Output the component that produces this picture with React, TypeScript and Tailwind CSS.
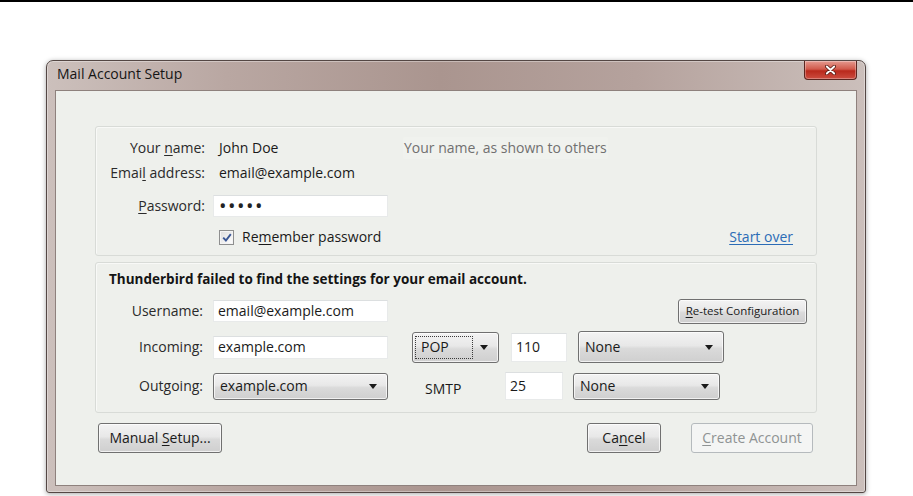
const btn =
  "rounded-[3px] border border-[#707070] bg-[linear-gradient(180deg,#f3f3f3_0%,#e8e8e8_45%,#dadada_55%,#cfcfcf_100%)] shadow-[inset_0_0_0_1px_rgba(255,255,255,0.7)]"

function U({ children }: { children: string }) {
  return <span className="underline decoration-1 underline-offset-[2px]">{children}</span>
}

function Arrow() {
  return (
    <svg width="8" height="5" viewBox="0 0 8 5" className="shrink-0">
      <path d="M0 0h8L4 5z" fill="#1a1a1a" />
    </svg>
  )
}

function Input({ value, className }: { value: string; className: string }) {
  return (
    <div
      className={`flex items-center border border-[#e8eaea] border-t-[#dcdfe0] bg-white px-[4px] ${className}`}
    >
      {value}
    </div>
  )
}

function Menu({ label, className, focus }: { label: string; className: string; focus?: boolean }) {
  return (
    <div className={`flex items-center justify-between pr-[10px] ${btn} ${className}`}>
      {focus ? (
        <span className="ml-[2px] flex h-[23px] w-[58px] items-center border border-dotted border-[#3a3a3a] pl-[5px]">
          {label}
        </span>
      ) : (
        <span className="pl-[6px]">{label}</span>
      )}
      <Arrow />
    </div>
  )
}

export default function App() {
  return (
    <div className="h-[496px] w-[913px] overflow-hidden bg-white font-['Open_Sans',sans-serif] text-[14px] leading-none text-[#1a1a1a]">
      <div className="h-[2px] bg-black" />
      <div className="ml-[46px] mt-[58px] flex h-[433px] w-[820px] flex-col rounded-t-[7px] rounded-b-[3px] border border-[#544744] bg-[linear-gradient(90deg,#ccc0bc_0%,#b9a7a2_22%,#aa958f_48%,#b5a29d_72%,#cbbfbb_100%)] px-[8px] pb-[6px] shadow-[0_1px_5px_rgba(0,0,0,0.35),inset_0_0_0_1px_rgba(255,255,255,0.35)]">
        {/* title bar */}
        <div className="flex h-[29px] shrink-0 items-start justify-between">
          <span className="mt-[6px] pl-[2px] text-[14px] text-[#151515]">Mail Account Setup</span>
          <div className="flex h-[19px] w-[53px] items-center justify-center rounded-b-[4px] border border-t-0 border-[#5b2620] bg-[linear-gradient(180deg,#e59a8f_0%,#d15a4b_45%,#b9291c_55%,#cc4d40_100%)] shadow-[inset_0_0_0_1px_rgba(255,255,255,0.3)]">
            <svg width="11" height="10" viewBox="0 0 11 10">
              <path d="M1.8 1.5l7.4 7M9.2 1.5l-7.4 7" stroke="#5a1d16" strokeWidth="3.6" strokeLinecap="round" />
              <path d="M1.8 1.5l7.4 7M9.2 1.5l-7.4 7" stroke="#ffffff" strokeWidth="1.9" strokeLinecap="round" />
            </svg>
          </div>
        </div>

        {/* client area */}
        <div className="flex flex-1 flex-col border border-[#8e817d] bg-[#eef0ec] px-[39px] pt-[35px]">
          {/* identity group */}
          <div className="rounded-[3px] border border-[#d8dbd7] px-0 pb-[7px] pt-[10px] shadow-[inset_1px_1px_0_#f8f9f7]">
            <div className="flex h-[22px] items-center">
              <span className="w-[109px] text-right text-[#2a2a2a]">
                Your <U>n</U>ame:
              </span>
              <div className="ml-[8px] flex w-[175px] items-center pl-[6px]">John Doe</div>
              <span className="ml-[15px] flex h-[22px] items-center rounded-[2px] bg-[#f0f2ee] px-[1px] text-[#707070]">
                Your name, as shown to others
              </span>
            </div>
            <div className="mt-[3px] flex h-[22px] items-center">
              <span className="w-[109px] text-right text-[#2a2a2a]">
                Emai<U>l</U> address:
              </span>
              <div className="ml-[8px] flex items-center pl-[6px]">email@example.com</div>
            </div>
            <div className="mt-[11px] flex h-[22px] items-center">
              <span className="w-[109px] text-right text-[#2a2a2a]">
                <U>P</U>assword:
              </span>
              <Input value="•••••" className="ml-[8px] h-[22px] w-[175px] pl-[5px] text-[20px] tracking-[1.5px] text-[#222]" />
            </div>
            <div className="mt-[9px] flex h-[22px] items-center">
              <div className="ml-[123px] flex h-[15px] w-[15px] items-center justify-center border border-[#8e8f8f] bg-[linear-gradient(135deg,#dcdcdc,#ffffff)] shadow-[inset_0_0_0_1px_#f4f4f4]">
                <svg width="10" height="9" viewBox="0 0 10 9">
                  <path d="M1.2 4.6l2.7 2.9L8.8 1.2" fill="none" stroke="#3a5795" strokeWidth="1.9" />
                </svg>
              </div>
              <span className="ml-[8px]">
                Re<U>m</U>ember password
              </span>
              <span className="ml-auto mr-[23px] text-[#2b6cb6] underline decoration-1 underline-offset-[2px]">
                Start over
              </span>
            </div>
          </div>

          {/* server settings group */}
          <div className="mt-[6px] rounded-[3px] border border-[#d8dbd7] pb-[12px] pt-[8px] shadow-[inset_1px_1px_0_#f8f9f7]">
            <div className="flex h-[18px] items-center pl-[13px] text-[13.5px] font-bold text-[#141414]">
              Thunderbird failed to find the settings for your email account.
            </div>
            <div className="mt-[9px] flex h-[26px] items-center">
              <span className="w-[107px] text-right text-[#2a2a2a]">Username:</span>
              <Input value="email@example.com" className="ml-[10px] h-[22px] w-[175px]" />
              <div className={`ml-auto mr-[9px] flex h-[25px] w-[129px] items-center justify-center text-[11.5px] ${btn}`}>
                <span>
                  <U>R</U>e-test Configuration
                </span>
              </div>
            </div>
            <div className="mt-[7px] flex h-[32px] items-center">
              <span className="w-[107px] text-right text-[#2a2a2a]">Incoming:</span>
              <Input value="example.com" className="ml-[10px] h-[23px] w-[175px]" />
              <Menu label="POP" focus className="ml-[24px] h-[31px] w-[87px]" />
              <Input value="110" className="ml-[12px] h-[29px] w-[56px]" />
              <Menu label="None" className="ml-[11px] h-[32px] w-[146px]" />
            </div>
            <div className="mt-[9px] flex h-[28px] items-center">
              <span className="w-[107px] text-right text-[#2a2a2a]">Outgoing:</span>
              <Menu label="example.com" className="ml-[10px] h-[27px] w-[175px]" />
              <span className="ml-[37px] mt-[6px] w-[43px]">SMTP</span>
              <Input value="25" className="ml-[37px] h-[28px] w-[58px]" />
              <Menu label="None" className="ml-[10px] h-[27px] w-[147px]" />
            </div>
          </div>

          {/* dialog buttons */}
          <div className="mt-[10px] flex h-[30px] items-stretch pl-[3px] pr-[4px]">
            <div className={`flex w-[124px] items-center justify-center ${btn}`}>
              <span>
                Manual <U>S</U>etup...
              </span>
            </div>
            <div className={`ml-auto flex w-[74px] items-center justify-center ${btn}`}>
              <span>
                Ca<U>n</U>cel
              </span>
            </div>
            <div className="ml-[30px] flex w-[122px] items-center justify-center rounded-[3px] border border-[#b5babd] bg-[#f4f5f4] text-[#8f9393]">
              <span>
                <U>C</U>reate Account
              </span>
            </div>
          </div>
        </div>
      </div>
    </div>
  )
}
